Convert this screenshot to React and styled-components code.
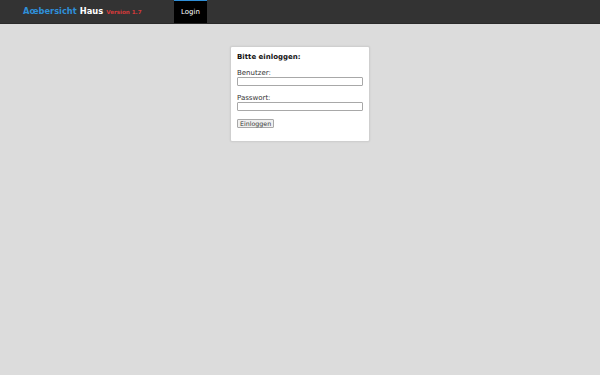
import styled, { createGlobalStyle } from "styled-components";

const GlobalStyle = createGlobalStyle`
  html, body {
    margin: 0;
    padding: 0;
    background: #dcdcdc;
    font-family: "DejaVu Sans", Verdana, sans-serif;
  }
`;

const Page = styled.div`
  min-height: 375px;
  background: #dcdcdc;
`;

const TopBar = styled.header`
  display: flex;
  align-items: stretch;
  height: 23px;
  background: #333333;
  border-bottom: 1px solid #2a2a2a;
  padding-left: 23px;
`;

const Brand = styled.div`
  display: flex;
  align-items: baseline;
  gap: 3px;
  padding-top: 6px;
  width: 151px;
  font-weight: bold;
  font-size: 8.3px;
`;

const BrandBlue = styled.span`
  color: #2f8fd8;
`;

const BrandWhite = styled.span`
  color: #ffffff;
`;

const Version = styled.span`
  color: #d43a3a;
  font-size: 5.6px;
`;

const Tab = styled.a`
  display: flex;
  align-items: center;
  justify-content: center;
  width: 33px;
  background: #000000;
  border-top: 1px solid #2f8fd8;
  color: #ffffff;
  font-size: 7px;
  text-decoration: none;
`;

const Main = styled.main`
  display: flex;
  justify-content: center;
  padding-top: 22px;
`;

const Panel = styled.form`
  width: 126px;
  padding: 6px 6px 13px 6px;
  background: #ffffff;
  border: 1px solid #cfcfcf;
  border-radius: 2px;
  box-shadow: 0 0 2px rgba(0, 0, 0, 0.08);
`;

const Title = styled.div`
  font-size: 7px;
  line-height: 8px;
  font-weight: bold;
  color: #111;
  margin-bottom: 8px;
`;

const Label = styled.label`
  display: block;
  font-size: 7px;
  color: #333;
  line-height: 8px;
`;

const Input = styled.input`
  display: block;
  box-sizing: border-box;
  width: 126px;
  height: 9px;
  margin: 0 0 ${(p) => (p.$last ? 0 : 8)}px 0;
  padding: 0;
  border: 1px solid #a8a8a8;
  border-radius: 1px;
  background: #fff;
`;

const Button = styled.button`
  display: block;
  box-sizing: border-box;
  height: 9px;
  padding: 0 2px;
  margin-top: 8px;
  font-family: "DejaVu Sans", Verdana, sans-serif;
  font-size: 6.3px;
  line-height: 7px;
  color: #333;
  background: #efefef;
  border: 1px solid #a8a8a8;
  border-radius: 1px;
`;

export default function App() {
  return (
    <Page>
      <GlobalStyle />
      <TopBar>
        <Brand>
          <BrandBlue>Aœbersicht</BrandBlue>
          <BrandWhite>Haus</BrandWhite>
          <Version>Version 1.7</Version>
        </Brand>
        <Tab href="#">Login</Tab>
      </TopBar>
      <Main>
        <Panel onSubmit={(e) => e.preventDefault()}>
          <Title>Bitte einloggen:</Title>
          <Label htmlFor="user">Benutzer:</Label>
          <Input id="user" type="text" />
          <Label htmlFor="pass">Passwort:</Label>
          <Input id="pass" type="password" $last />
          <Button type="submit">Einloggen</Button>
        </Panel>
      </Main>
    </Page>
  );
}
